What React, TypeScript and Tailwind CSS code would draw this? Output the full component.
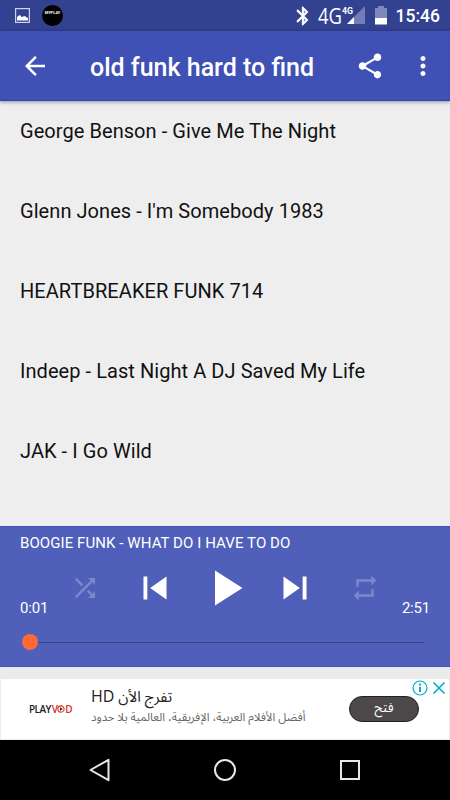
import React from 'react';

type IconProps = {
  path: string;
  className?: string;
};

function Icon({ path, className }: IconProps) {
  return (
    <svg viewBox="0 0 24 24" fill="currentColor" className={className}>
      <path d={path} />
    </svg>
  );
}

const icons = {
  back: 'M20 11H7.83l5.59-5.59L12 4l-8 8 8 8 1.41-1.41L7.83 13H20v-2z',
  share:
    'M18 16.08c-.76 0-1.44.3-1.96.77L8.91 12.7c.05-.23.09-.46.09-.7s-.04-.47-.09-.7l7.05-4.11c.54.5 1.25.81 2.04.81 1.66 0 3-1.34 3-3s-1.34-3-3-3-3 1.34-3 3c0 .24.04.47.09.7L8.04 9.81C7.5 9.31 6.79 9 6 9c-1.66 0-3 1.34-3 3s1.34 3 3 3c.79 0 1.5-.31 2.04-.81l7.12 4.16c-.05.21-.08.43-.08.65 0 1.61 1.31 2.92 2.92 2.92s2.92-1.31 2.92-2.92-1.31-2.92-2.92-2.92z',
  more: 'M12 8c1.1 0 2-.9 2-2s-.9-2-2-2-2 .9-2 2 .9 2 2 2zm0 2c-1.1 0-2 .9-2 2s.9 2 2 2 2-.9 2-2-.9-2-2-2zm0 6c-1.1 0-2 .9-2 2s.9 2 2 2 2-.9 2-2-.9-2-2-2z',
  shuffle:
    'M10.59 9.17L5.41 4 4 5.41l5.17 5.17 1.42-1.41zM14.5 4l2.04 2.04L4 18.59 5.41 20 17.96 7.46 20 9.5V4h-5.5zm.33 9.41l-1.41 1.41 3.13 3.13L14.5 20H20v-5.5l-2.04 2.04-3.13-3.13z',
  previous: 'M6 6h2v12H6zm3.5 6l8.5 6V6z',
  play: 'M8 5v14l11-7z',
  next: 'M6 18l8.5-6L6 6v12zM16 6v12h2V6h-2z',
  repeat: 'M7 7h10v3l4-4-4-4v3H5v6h2V7zm10 10H7v-3l-4 4 4 4v-3h12v-6h-2v4z',
  bluetooth:
    'M17.71 7.71L12 2h-1v7.59L6.41 5 5 6.41 10.59 12 5 17.59 6.41 19 11 14.41V22h1l5.71-5.71-4.3-4.29 4.3-4.29zM13 5.83l1.88 1.88L13 9.59V5.83zm1.88 10.46L13 18.17v-3.76l1.88 1.88z',
};

function StatusBar() {
  return (
    <div className="flex h-[31px] shrink-0 items-center bg-[#334191] pr-[10px] pl-[15px] text-white">
      <svg viewBox="0 0 15 15" className="h-[15px] w-[15px]">
        <rect x="0.6" y="0.6" width="13.8" height="13.8" fill="none" stroke="#cdd2ea" strokeWidth="1.2" />
        <path d="M2 12.5V9.500l1-1.500 2-1 1.500 2 1.500-.5 2-.5 1 1 2 1v2.500z" fill="#fff" />
      </svg>
      <div className="ml-3 flex h-[21px] w-[21px] flex-col items-center rounded-full bg-black pt-[6px] text-[4px] leading-[4px] font-bold">
        <span>MYPLAY</span>
      </div>
      <Icon path={icons.bluetooth} className="ml-auto h-[22px] w-[22px] stroke-white stroke-[0.5]" />
      <svg viewBox="0 0 51 19" className="ml-[3px] h-[19px] w-[51px] overflow-visible">
        <text
          x="1"
          y="18"
          fontSize="22.500"
          fill="#fff"
          textLength="24"
          lengthAdjust="spacingAndGlyphs"
          className="font-['Open_Sans',sans-serif]"
        >
          4G
        </text>
        <path d="M48 0v18H30z" fill="#fff" opacity="0.32" />
        <path d="M37 11v7h-7z" fill="#fff" />
        <text x="25" y="7.500" fontSize="9.500" fontWeight="700" fill="#fff" textLength="11" lengthAdjust="spacingAndGlyphs">
          4G
        </text>
      </svg>
      <svg viewBox="0 0 12 19" className="ml-[7px] h-[19px] w-[12px]">
        <path d="M0 2h3V0h6v2h3v10H0z" fill="#fff" opacity="0.38" />
        <path d="M0 12h12v6.500H0z" fill="#fff" />
      </svg>
      <span className="ml-[9px] pt-[2px] text-[17.500px] leading-none font-medium">15:46</span>
    </div>
  );
}

function AppBar() {
  return (
    <header className="z-10 flex h-[70px] shrink-0 items-center border-b border-[#3143b5] bg-[#3f51b5] pr-[12px] pl-5 text-white shadow-[0_1px_4px_rgba(0,0,0,0.4)]">
      <Icon path={icons.back} className="h-[30px] w-[30px]" />
      <h1 className="ml-10 pt-[5px] text-[25px] font-medium whitespace-nowrap">old funk hard to find</h1>
      <Icon path={icons.share} className="ml-auto h-[30px] w-[30px]" />
      <Icon path={icons.more} className="ml-[23px] h-[30px] w-[30px]" />
    </header>
  );
}

function Player() {
  return (
    <section className="flex h-[141px] shrink-0 flex-col border-y border-[#4253b3] bg-[#5060ba] text-white">
      <p className="h-[31px] px-5 pt-1 text-[15px] leading-6 tracking-[0.08px]">BOOGIE FUNK - WHAT DO I HAVE TO DO</p>
      <div className="flex h-[60px] items-end justify-between px-5">
        <span className="w-[30px] text-[15px] leading-5 tracking-[-0.2px]">0:01</span>
        <div className="-mx-10 flex h-[60px] w-[350px] items-center">
          <div className="flex w-[70px] justify-center">
            <Icon path={icons.shuffle} className="h-[30px] w-[30px] opacity-25" />
          </div>
          <div className="flex w-[70px] justify-center">
            <Icon path={icons.previous} className="h-[46px] w-[46px]" />
          </div>
          <div className="flex w-[70px] justify-center">
            <Icon path={icons.play} className="h-[60px] w-[60px]" />
          </div>
          <div className="flex w-[70px] justify-center">
            <Icon path={icons.next} className="h-[46px] w-[46px]" />
          </div>
          <div className="flex w-[70px] justify-center">
            <Icon path={icons.repeat} className="h-[30px] w-[30px] opacity-25" />
          </div>
        </div>
        <span className="w-[30px] text-right text-[15px] leading-5 tracking-[-0.2px]">2:51</span>
      </div>
      <div className="mt-4 flex items-center pr-[26px] pl-[22px]">
        <div className="h-4 w-4 rounded-full bg-[#ff6938]" />
        <div className="h-px flex-1 bg-[#3a4375]" />
      </div>
    </section>
  );
}

function AdBanner() {
  return (
    <div className="h-[73px] shrink-0 bg-[#ebebeb] px-px pt-3 pb-px">
      <div className="relative flex h-[60px] items-center bg-white">
        <div className="ml-[28px] flex w-[62px] items-center font-['Open_Sans',sans-serif] text-[10px] leading-none font-semibold tracking-[-0.6px] text-[#222]">
          <span>PLAY</span>
          <span className="ml-[1px] text-[#dc2b16]">V</span>
          <svg viewBox="0 0 8 8" className="h-[8px] w-[8px]">
            <circle cx="4" cy="4" r="3.1" fill="none" stroke="#dc2b16" strokeWidth="1.1" />
            <path d="M3 2.300v3.400L5.800 4z" fill="#222" />
          </svg>
          <span className="text-[#dc2b16]">D</span>
        </div>
        <div className="flex h-full w-[215px] flex-col items-start pt-[5px] font-['Noto_Sans_Arabic','DejaVu_Sans',sans-serif]">
          <p dir="rtl" className="h-6 text-[15px] leading-6 whitespace-nowrap text-[#222]">
            تفرج الأن <span className="font-['Open_Sans',sans-serif] text-[16px]">HD</span>
          </p>
          <p dir="rtl" className="pt-px text-[11.500px] leading-4 whitespace-nowrap text-[#666]">
            أفضل الأفلام العربية، الإفريقية، العالمية بلا حدود
          </p>
        </div>
        <button
          dir="rtl"
          className="mr-[30px] ml-auto h-[26px] w-[70px] rounded-full border border-[#222] bg-[#4d494a] pb-[3px] font-['Noto_Sans_Arabic','DejaVu_Sans',sans-serif] text-[13px] leading-5 text-white"
        >
          فتح
        </button>
        <div className="absolute top-[1px] right-[3px] flex items-center gap-[4px] text-[#00aecd]">
          <svg viewBox="0 0 16 16" className="h-4 w-4" fill="none" stroke="currentColor">
            <circle cx="8" cy="8" r="7" strokeWidth="1.2" fill="#fff" />
            <path d="M8 3.500v2M8 6.800v5.200" strokeWidth="2" />
          </svg>
          <svg viewBox="0 0 14 14" className="h-[14px] w-[14px]" fill="none" stroke="currentColor" strokeWidth="1.6">
            <path d="M1.500 1.500l11 11M12.500 1.500l-11 11" />
          </svg>
        </div>
      </div>
    </div>
  );
}

function NavigationBar() {
  return (
    <nav className="flex h-[60px] shrink-0 items-center justify-center gap-[101px] bg-black">
      <svg viewBox="0 0 24 24" className="h-6 w-6" fill="none" stroke="#e6e6e6" strokeWidth="2">
        <path d="M20.500 1.800v20.400L2.500 12z" strokeLinejoin="round" />
      </svg>
      <svg viewBox="0 0 24 24" className="h-6 w-6" fill="none" stroke="#e6e6e6" strokeWidth="2">
        <circle cx="12" cy="12" r="10" />
      </svg>
      <svg viewBox="0 0 24 24" className="h-6 w-6" fill="none" stroke="#e6e6e6" strokeWidth="2">
        <rect x="3" y="3" width="18" height="18" />
      </svg>
    </nav>
  );
}

export default function App() {
  const songs = [
    'George Benson - Give Me The Night',
    "Glenn Jones - I'm Somebody 1983",
    'HEARTBREAKER FUNK 714',
    'Indeep - Last Night A DJ Saved My Life',
    'JAK - I Go Wild',
  ];

  return (
    <div className="flex h-[800px] w-[450px] flex-col overflow-hidden bg-[#eee] font-['Roboto',sans-serif]">
      <StatusBar />
      <AppBar />
      <ul className="min-h-0 flex-1 overflow-hidden px-5 pt-[15px] text-xl tracking-[0.06px] text-[#111]">
        {songs.map((song) => (
          <li key={song} className="h-20 leading-[30px]">
            {song}
          </li>
        ))}
      </ul>
      <Player />
      <AdBanner />
      <NavigationBar />
    </div>
  );
}
